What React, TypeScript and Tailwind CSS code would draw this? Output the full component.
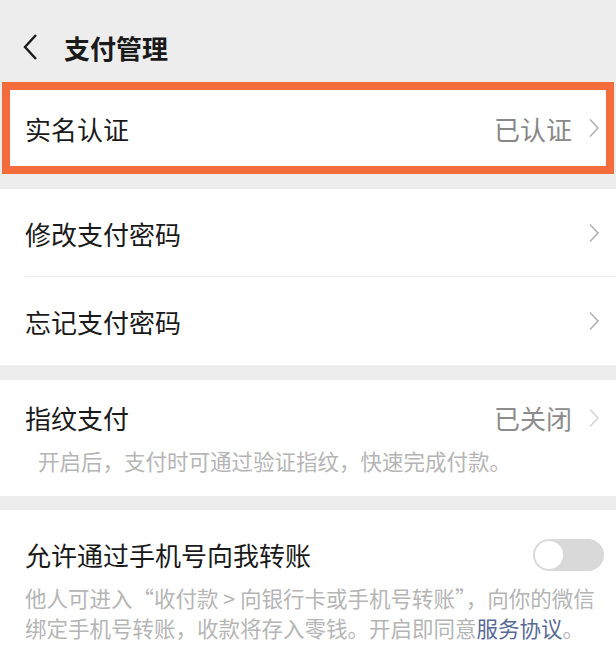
import React from "react";

const font = { fontFamily: '"Noto Sans CJK SC", "Noto Sans", sans-serif' };

function Chevron({ light = false }: { light?: boolean }) {
  return (
    <svg width="12" height="20" viewBox="0 0 12 20" className="shrink-0">
      <path d="M2 1.5 L10 10 L2 18.5" fill="none" stroke={light ? "#d6d6d6" : "#b2b2b2"} strokeWidth="1.6" />
    </svg>
  );
}

function Row({ label, value, divider = false }: { label: string; value?: string; divider?: boolean }) {
  return (
    <div className="relative flex h-[88px] items-center pl-[25px] pr-[16px]">
      <span className="flex-1 text-[26px] text-[#1a1a1a]">{label}</span>
      {value && <span className="mr-[16px] text-[26px] text-[#888888]">{value}</span>}
      <Chevron />
      {divider && <div className="absolute bottom-0 left-[25px] right-0 h-px bg-[#ececec]" />}
    </div>
  );
}

export default function App() {
  return (
    <div className="h-[670px] w-[616px] overflow-hidden bg-[#ededed]" style={font}>
      <header className="flex h-[82px] items-center pl-[22px] pt-[12px]">
        <svg width="18" height="28" viewBox="0 0 18 28">
          <path d="M14 2 L3 14 L14 26" fill="none" stroke="#1a1a1a" strokeWidth="2.4" />
        </svg>
        <h1 className="ml-[24px] text-[26px] font-bold text-[#1a1a1a]">支付管理</h1>
      </header>

      <div className="mx-[2px] border-[8px] border-[#f46c3c] bg-white">
        <div className="flex h-[76px] items-center pl-[15px] pr-[6px]">
          <span className="flex-1 text-[26px] text-[#1a1a1a]">实名认证</span>
          <span className="mr-[16px] text-[26px] text-[#888888]">已认证</span>
          <Chevron />
        </div>
      </div>

      <section className="mt-[15px] bg-white">
        <Row label="修改支付密码" divider />
        <Row label="忘记支付密码" />
      </section>

      <section className="mt-[15px] h-[116px] bg-white">
        <div className="flex items-center pl-[25px] pr-[16px] pt-[18px]">
          <span className="flex-1 text-[26px] text-[#1a1a1a]">指纹支付</span>
          <span className="mr-[16px] text-[26px] text-[#8c8c8c]">已关闭</span>
          <Chevron light />
        </div>
        <p className="mt-[8px] pl-[38px] text-[21.5px] text-[#b5b5b5]">开启后，支付时可通过验证指纹，快速完成付款。</p>
      </section>

      <section className="mt-[14px] bg-white pb-[30px]">
        <div className="flex items-center pl-[25px] pr-[12px] pt-[25px]">
          <span className="flex-1 text-[26px] text-[#1a1a1a]">允许通过手机号向我转账</span>
          <div className="flex h-[32px] w-[71px] items-center rounded-full bg-[#d9d9d9] p-[2px]">
            <div className="h-[28px] w-[28px] rounded-full bg-white" />
          </div>
        </div>
        <p className="mt-[9px] whitespace-nowrap pl-[25px] text-[21.5px] leading-[30px] text-[#b5b5b5]">
          他人可进入“收付款 &gt; 向银行卡或手机号转账”，向你的微信
          <br />
          绑定手机号转账，收款将存入零钱。开启即同意
          <span className="text-[#576b95]">服务协议</span>。
        </p>
      </section>
    </div>
  );
}
